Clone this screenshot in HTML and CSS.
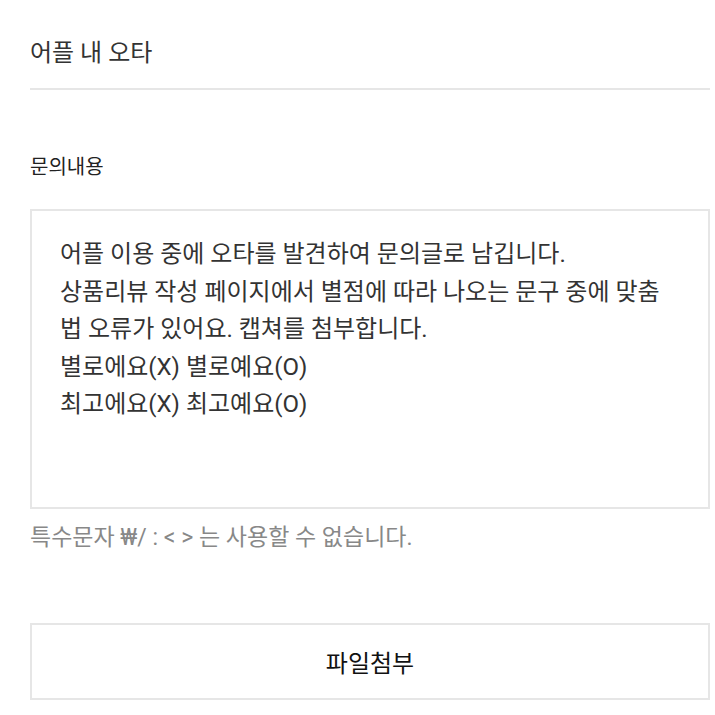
FILE: index.html
```html
<!DOCTYPE html>
<html lang="ko">
<head>
    <meta charset="UTF-8">
    <meta name="viewport" content="width=device-width, initial-scale=1.0">
    <title>문의하기</title>
    <link rel="stylesheet" href="styles.css">
</head>
<body>
    <div class="inquiry">
        <div class="subject">
            <h1>어플 내 오타</h1>
        </div>

        <p class="field-label">문의내용</p>
        <div class="content-box">어플 이용 중에 오타를 발견하여 문의글로 남깁니다.
상품리뷰 작성 페이지에서 별점에 따라 나오는 문구 중에 맞춤법 오류가 있어요. 캡쳐를 첨부합니다.
별로에요(X) 별로예요(O)
최고에요(X) 최고예요(O)</div>
        <p class="notice">특수문자 ₩/ : &lt; &gt; 는 사용할 수 없습니다.</p>

        <button type="button" class="attach-btn">파일첨부</button>
    </div>
</body>
</html>
```

FILE: styles.css
```css
body {
    font-family: Roboto, "Noto Sans CJK KR", "Noto Sans", sans-serif;
    background-color: #fff;
    color: #333;
    margin: 0;
    padding: 0 5px 0 30px;
}

.subject {
    padding: 36px 0 18px;
    border-bottom: 2px solid #e6e6e6;
}

.subject h1 {
    margin: 0;
    font-size: 24px;
    font-weight: normal;
    line-height: 34px;
    color: #333;
}

.field-label {
    margin: 63px 0 28px;
    font-size: 20px;
    line-height: 28px;
    color: #222;
}

.content-box {
    box-sizing: border-box;
    height: 300px;
    padding: 25px 30px 0 28px;
    border: 2px solid #e6e6e6;
    font-size: 24px;
    line-height: 37.5px;
    color: #333;
    white-space: pre-wrap;
}

.notice {
    margin: 13px 0 0;
    font-size: 23px;
    line-height: 32px;
    color: #888;
}

.attach-btn {
    display: block;
    box-sizing: border-box;
    width: 100%;
    height: 77px;
    margin-top: 69px;
    background: #fff;
    border: 2px solid #e6e6e6;
    font-family: inherit;
    font-size: 24px;
    color: #111;
    cursor: pointer;
}
```
